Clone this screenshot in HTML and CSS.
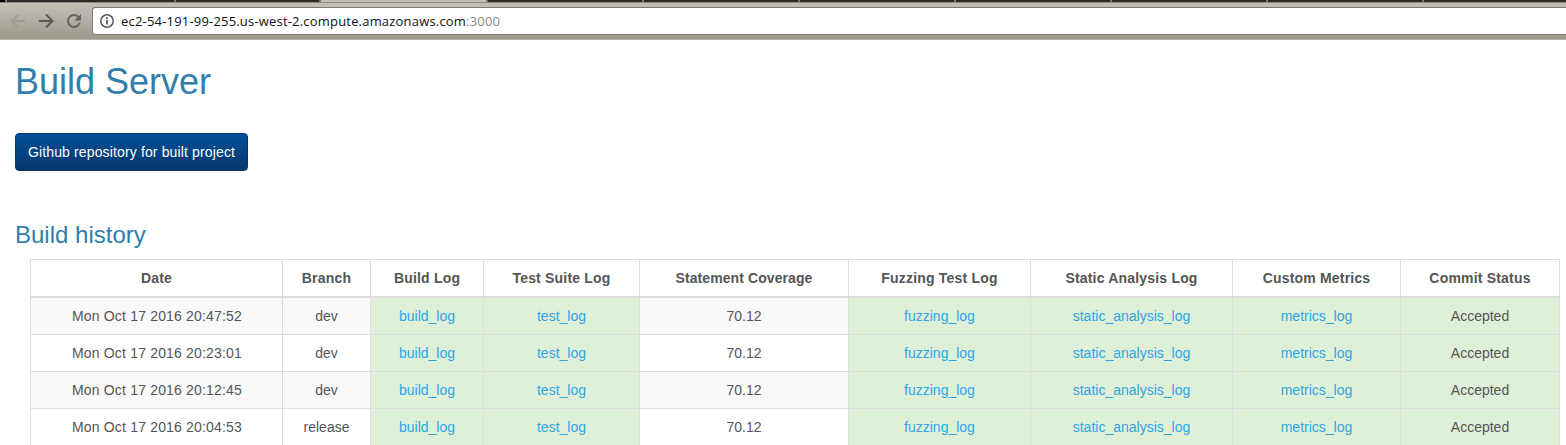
FILE: index.html
```html
<!DOCTYPE html>
<html lang="en">
<head>
<meta charset="utf-8">
<title>Build Server</title>
<link rel="stylesheet" href="styles.css">
</head>
<body>
<header class="browser">
  <div class="tabs"><i class="tab tab-edge"></i><i class="tab tab-first"></i><i class="tab tab-second"></i><i class="tab tab-active"></i><i class="tab"></i><i class="tab"></i><i class="tab"></i><i class="tab"></i><i class="tab"></i><i class="tab"></i><i class="tab tab-last"></i></div>
  <div class="toolbar">
    <svg class="nav" width="92" height="31" viewBox="0 0 92 31" fill="none" stroke-width="2">
      <path class="back" d="M25 13H12.5M18.5 6.5L12 13l6.500 6.500"/>
      <path class="forward" d="M39 13H52M46 6.500L52.500 13L46 19.500"/>
      <path class="reload" d="M78.800 9.300A6 6 0 1 0 79.700 14.800"/>
      <path class="reload-head" d="M81 6v6.500h-6.500z"/>
    </svg>
    <div class="address">
      <svg width="16" height="16" viewBox="0 0 16 16"><circle cx="8" cy="8" r="6.200" fill="none" stroke="#5a5a5a" stroke-width="1.500"/><path d="M7.100 7h1.800v4.500H7.100zM7.100 4.300h1.800v1.700H7.100z" fill="#5a5a5a"/></svg>
      <span class="url">ec2-54-191-99-255.us-west-2.compute.amazonaws.com<span class="port">:3000</span></span>
    </div>
  </div>
</header>
<main>
  <h1>Build Server</h1>
  <a class="button">Github repository for built project</a>
  <h2>Build history</h2>
  <table class="history">
    <colgroup><col class="c-date"><col class="c-branch"><col class="c-build"><col class="c-test"><col class="c-cover"><col class="c-fuzz"><col class="c-static"><col class="c-metrics"><col class="c-status"></colgroup>
    <thead><tr><th>Date</th><th>Branch</th><th>Build Log</th><th>Test Suite Log</th><th class="coverage">Statement Coverage</th><th>Fuzzing Test Log</th><th>Static Analysis Log</th><th>Custom Metrics</th><th>Commit Status</th></tr></thead>
    <tbody>
      <tr><td class="date">Mon Oct 17 2016 20:47:52</td><td>dev</td><td class="ok"><a>build_log</a></td><td class="ok"><a>test_log</a></td><td>70.12</td><td class="ok"><a>fuzzing_log</a></td><td class="ok"><a>static_analysis_log</a></td><td class="ok"><a>metrics_log</a></td><td class="ok">Accepted</td></tr>
      <tr><td class="date">Mon Oct 17 2016 20:23:01</td><td>dev</td><td class="ok"><a>build_log</a></td><td class="ok"><a>test_log</a></td><td>70.12</td><td class="ok"><a>fuzzing_log</a></td><td class="ok"><a>static_analysis_log</a></td><td class="ok"><a>metrics_log</a></td><td class="ok">Accepted</td></tr>
      <tr><td class="date">Mon Oct 17 2016 20:12:45</td><td>dev</td><td class="ok"><a>build_log</a></td><td class="ok"><a>test_log</a></td><td>70.12</td><td class="ok"><a>fuzzing_log</a></td><td class="ok"><a>static_analysis_log</a></td><td class="ok"><a>metrics_log</a></td><td class="ok">Accepted</td></tr>
      <tr><td class="date">Mon Oct 17 2016 20:04:53</td><td>release</td><td class="ok"><a>build_log</a></td><td class="ok"><a>test_log</a></td><td>70.12</td><td class="ok"><a>fuzzing_log</a></td><td class="ok"><a>static_analysis_log</a></td><td class="ok"><a>metrics_log</a></td><td class="ok">Accepted</td></tr>
    </tbody>
  </table>
</main>
</body>
</html>
```
FILE: styles.css
```css
* { box-sizing: border-box; }
html, body { margin: 0; height: 445px; overflow: hidden; }
body { background: #fff; color: #555; font: 14px/20px "Liberation Sans", Arial, sans-serif; }
.browser { height: 40px; }
.tabs { display: flex; height: 2px; background: #2c2b28; }
.tab { flex: none; width: 156px; border-right: 2px solid #77756f; }
.tab-edge { width: 7px; background: #000; }
.tab-first { width: 169px; }
.tab-second { width: 145px; }
.tab-active { width: 167px; background: #c3beb5; }
.tab-last { border: 0; }
.toolbar { display: flex; height: 38px; padding-top: 5px; border-top: 1px solid #8b8984; border-bottom: 1px solid #b7b4ae; background: linear-gradient(#c5c0b7, #9e998f); }
.nav { flex: none; }
.back { stroke: #a09c94; }
.forward { stroke: #5a5954; }
.reload { stroke: #66635e; }
.reload-head { fill: #66635e; }
.address { display: flex; align-items: center; flex: 1; height: 28px; margin-top: -1px; padding-left: 6px; border: 1px solid #7d7b74; border-right: 0; border-radius: 3px 0 0 3px; background: #fff; }
.url { margin-left: 6px; color: #111; font: 13px/20px "Open Sans", "Noto Sans", sans-serif; letter-spacing: .19px; white-space: nowrap; }
.port { color: #888; }
main { padding: 0 15px; }
h1, h2 { margin: 0; color: #317eac; font-weight: 400; }
h1 { padding-top: 22px; font-size: 36px; line-height: 40px; }
.button { display: block; width: 233px; height: 38px; margin-top: 31px; padding: 8px 0; border: 1px solid #02376b; border-radius: 4px; background: linear-gradient(#04519b, #044687 40%, #033769); color: #fff; letter-spacing: .14px; text-align: center; }
h2 { margin-top: 50px; font-size: 24px; line-height: 28px; }
.history { width: 1530px; margin: 10px 0 0 15px; table-layout: fixed; border-collapse: separate; border-spacing: 0; border: solid #ddd; border-width: 1px 0 0 1px; }
.c-date { width: 252px; }
.c-branch { width: 88px; }
.c-build { width: 113px; }
.c-test { width: 156px; }
.c-cover { width: 209px; }
.c-fuzz { width: 182px; }
.c-static { width: 202px; }
.c-metrics { width: 168px; }
.c-status { width: 159px; }
th, td { height: 37px; padding: 8px 0; border: solid #ddd; border-width: 0 1px 1px 0; text-align: center; white-space: nowrap; }
th { height: 38px; border-bottom-width: 2px; letter-spacing: .19px; }
th.coverage { letter-spacing: .08px; }
tbody tr:nth-child(odd) { background: #f9f9f9; }
.date { padding-left: 1px; letter-spacing: .18px; }
.ok { background: #dff0d8; }
.history a { color: #2fa4e7; }
```
